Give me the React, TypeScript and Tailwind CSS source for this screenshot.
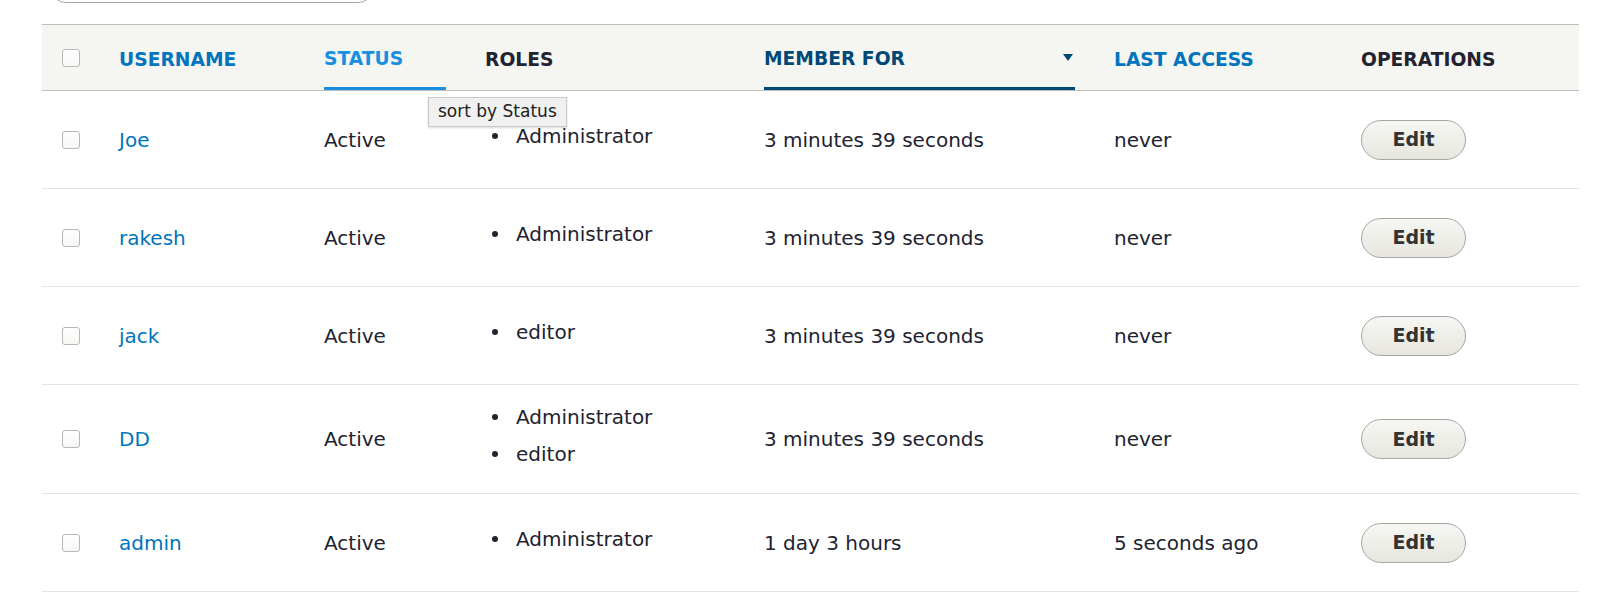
import React from "react";

type Row = { name: string; roles: string[]; member: string; last: string };

const rows: Row[] = [
  { name: "Joe", roles: ["Administrator"], member: "3 minutes 39 seconds", last: "never" },
  { name: "rakesh", roles: ["Administrator"], member: "3 minutes 39 seconds", last: "never" },
  { name: "jack", roles: ["editor"], member: "3 minutes 39 seconds", last: "never" },
  { name: "DD", roles: ["Administrator", "editor"], member: "3 minutes 39 seconds", last: "never" },
  { name: "admin", roles: ["Administrator"], member: "1 day 3 hours", last: "5 seconds ago" },
];

const cols = "grid grid-cols-[77px_205px_161px_279px_350px_247px_218px]";

function Checkbox() {
  return (
    <div className="h-[18px] w-[18px] rounded-[3px] border border-[#b8b8b8] bg-gradient-to-b from-white to-[#f7f7f5]" />
  );
}

export default function App() {
  return (
    <div
      className="relative min-h-[595px] w-[1600px] overflow-hidden bg-white text-[#222330]"
      style={{ fontFamily: '"DejaVu Sans", "Liberation Sans", sans-serif' }}
    >
      {/* top input (cut off) */}
      <div className="flex h-[3px] items-end overflow-hidden pl-[47px]">
        <div className="h-[40px] w-[330px] shrink-0 rounded-[20px] border border-[#a8a8a8] bg-white" />
      </div>

      <div className="ml-[42px] mt-[21px] w-[1537px]">
        {/* header */}
        <div className={`${cols} h-[67px] border-y border-[#bfbfba] bg-[#f5f5f2] text-[18.7px] font-bold`}>
          <div className="flex items-center pl-[20px]">
            <Checkbox />
          </div>
          <div className="flex h-full items-center pt-[5px]">
            <span className="text-[#0074bd]">USERNAME</span>
          </div>
          <div className="flex h-full">
            <div className="flex h-full w-[122px] items-center border-b-[3px] border-[#1a8ee0] pt-[6px]">
              <span className="text-[#1a8ee0]">STATUS</span>
            </div>
          </div>
          <div className="flex h-full items-center pt-[5px]">
            <span>ROLES</span>
          </div>
          <div className="flex h-full">
            <div className="flex h-full w-[311px] items-center justify-between border-b-[3px] border-[#004875] pt-[6px] pr-[2px]">
              <span className="text-[#004875]">MEMBER FOR</span>
              <svg width="10" height="7" viewBox="0 0 10 7" className="mb-[4px]">
                <path d="M0 0 L10 0 L5 7 Z" fill="#004875" />
              </svg>
            </div>
          </div>
          <div className="flex h-full items-center pt-[5px]">
            <span className="text-[#0074bd]">LAST ACCESS</span>
          </div>
          <div className="flex h-full items-center pt-[5px]">
            <span>OPERATIONS</span>
          </div>
        </div>

        {/* body */}
        {rows.map((r) => (
          <div key={r.name} className={`${cols} min-h-[98px] items-center border-b border-[#e6e4df] text-[20px]`}>
            <div className="flex items-center pl-[20px]">
              <Checkbox />
            </div>
            <div className="text-[#0074bd]">{r.name}</div>
            <div>Active</div>
            <div className="pt-[13px] pb-[21px]">
              {r.roles.map((role) => (
                <div key={role} className="flex h-[37px] items-center">
                  <span className="w-[7px]" />
                  <span className="h-[6px] w-[6px] rounded-full bg-[#222330]" />
                  <span className="ml-[18px]">{role}</span>
                </div>
              ))}
            </div>
            <div>{r.member}</div>
            <div>{r.last}</div>
            <div>
              <button className="flex h-[40px] w-[105px] items-center justify-center rounded-full border border-[#a6a6a6] bg-gradient-to-b from-[#f6f6f3] to-[#e7e7df] text-[19px] font-bold text-[#333]">
                Edit
              </button>
            </div>
          </div>
        ))}
      </div>

      {/* tooltip */}
      <div className="absolute left-[428px] top-[97px] flex h-[30px] items-center border border-[#c9c9c9] bg-[#f0f0f0] px-[9px] text-[17px] text-[#222] shadow-[0_1px_2px_rgba(0,0,0,0.15)]">
        sort by Status
      </div>
    </div>
  );
}
